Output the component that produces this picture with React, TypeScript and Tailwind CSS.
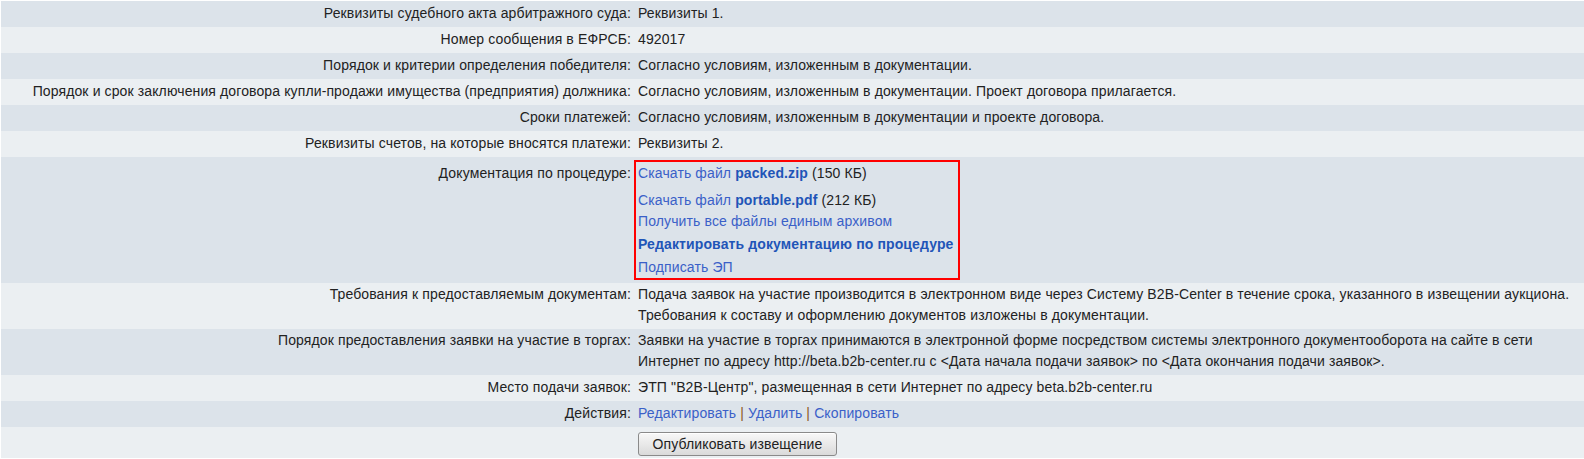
import React from 'react';

interface Row {
  label: string;
  value: React.ReactNode;
  tall?: boolean;
}

const link = 'text-[#3a60c8] hover:underline cursor-pointer';
const boldLink = 'font-bold text-[#1f55b8]';

const rows: Row[] = [
  { label: 'Реквизиты судебного акта арбитражного суда:', value: 'Реквизиты 1.' },
  { label: 'Номер сообщения в ЕФРСБ:', value: '492017' },
  {
    label: 'Порядок и критерии определения победителя:',
    value: 'Согласно условиям, изложенным в документации.',
  },
  {
    label: 'Порядок и срок заключения договора купли-продажи имущества (предприятия) должника:',
    value: 'Согласно условиям, изложенным в документации. Проект договора прилагается.',
  },
  {
    label: 'Сроки платежей:',
    value: 'Согласно условиям, изложенным в документации и проекте договора.',
  },
  { label: 'Реквизиты счетов, на которые вносятся платежи:', value: 'Реквизиты 2.' },
];

const rowsAfter: Row[] = [
  {
    label: 'Требования к предоставляемым документам:',
    tall: true,
    value: (
      <>
        Подача заявок на участие производится в электронном виде через Систему B2B-Center в течение
        срока, указанного в извещении аукциона.
        <br />
        Требования к составу и оформлению документов изложены в документации.
      </>
    ),
  },
  {
    label: 'Порядок предоставления заявки на участие в торгах:',
    tall: true,
    value: (
      <>
        Заявки на участие в торгах принимаются в электронной форме посредством системы электронного
        документооборота на сайте в сети
        <br />
        Интернет по адресу http://beta.b2b-center.ru с &lt;Дата начала подачи заявок&gt; по &lt;Дата
        окончания подачи заявок&gt;.
      </>
    ),
  },
  {
    label: 'Место подачи заявок:',
    value: 'ЭТП "B2B-Центр", размещенная в сети Интернет по адресу beta.b2b-center.ru',
  },
  {
    label: 'Действия:',
    value: (
      <>
        <span className={link}>Редактировать</span>
        <span className="text-[#8b5a22]"> | </span>
        <span className={link}>Удалить</span>
        <span className="text-[#8b5a22]"> | </span>
        <span className={link}>Скопировать</span>
      </>
    ),
  },
];

function InfoRow({ row, dark }: { row: Row; dark: boolean }) {
  const pad = row.tall ? 'pt-px pb-[3px]' : 'pt-[2px] pb-[3px]';
  return (
    <div className={`flex ${dark ? 'bg-[#dce3ea]' : 'bg-[#ebeff2]'}`}>
      <div className={`w-[631px] shrink-0 pr-px text-right leading-[21px] ${pad}`}>{row.label}</div>
      <div className={`flex-1 pl-[6px] leading-[21px] ${pad}`}>{row.value}</div>
    </div>
  );
}

export default function App() {
  return (
    <div
      className="min-h-[459px] bg-white pt-px pl-px text-[14px] tracking-[0.12px] text-[#222]"
      style={{ fontFamily: '"Liberation Sans", Arial, sans-serif' }}
    >
      <div className="bg-[#ebeff2]">
        {rows.map((row, i) => (
          <InfoRow key={row.label} row={row} dark={i % 2 === 0} />
        ))}

        {/* Documentation */}
        <div className="flex bg-[#dce3ea]">
          <div className="w-[631px] shrink-0 pr-px pt-[6px] text-right leading-[20px]">
            Документация по процедуре:
          </div>
          <div className="flex-1 pl-[2px] pt-[3px] pb-[3px]">
            <div className="inline-block border-2 border-[#ff0000] pl-[2px] pr-[5px] pt-px pb-px leading-[20px]">
              <div>
                <span className={link}>
                  Скачать файл <span className={boldLink}>packed.zip</span>
                </span>{' '}
                (150 КБ)
              </div>
              <div className="mt-[7px]">
                <span className={link}>
                  Скачать файл <span className={boldLink}>portable.pdf</span>
                </span>{' '}
                (212 КБ)
              </div>
              <div className="mt-px">
                <span className={link}>Получить все файлы единым архивом</span>
              </div>
              <div className="mt-[3px]">
                <span className={boldLink}>Редактировать документацию по процедуре</span>
              </div>
              <div className="mt-[3px]">
                <span className={link}>Подписать ЭП</span>
              </div>
            </div>
          </div>
        </div>

        {rowsAfter.map((row, i) => (
          <InfoRow key={row.label} row={row} dark={i % 2 === 1} />
        ))}

        <div className="flex pt-[5px] pb-[2px]">
          <div className="w-[631px] shrink-0" />
          <div className="pl-[6px]">
            <button className="h-[24px] w-[199px] rounded-[3px] border border-[#8a8a8a] bg-gradient-to-b from-[#f8f8f8] to-[#dadada] text-[14px] text-[#222] shadow-[inset_0_1px_0_#fff]">
              Опубликовать извещение
            </button>
          </div>
        </div>
      </div>
    </div>
  );
}
